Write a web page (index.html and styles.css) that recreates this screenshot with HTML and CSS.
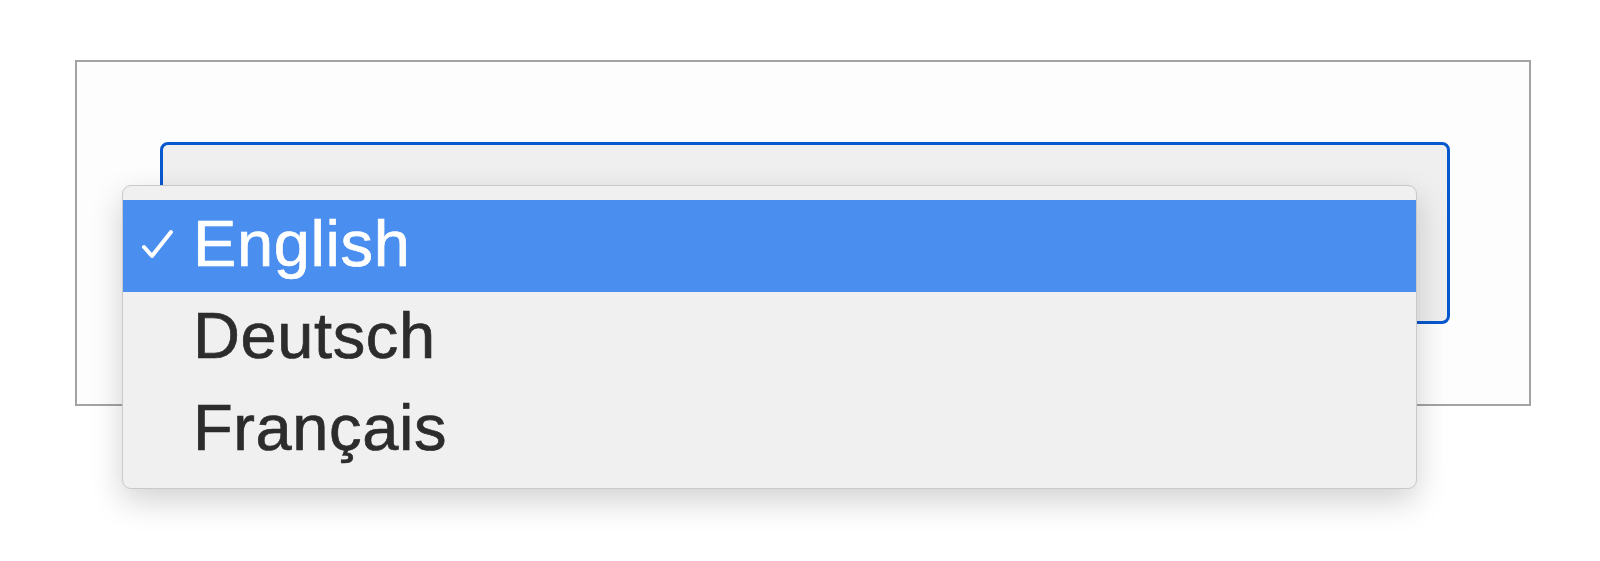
FILE: index.html
```html
<!DOCTYPE html>
<html>
<head>
<meta charset="utf-8">
<link rel="stylesheet" href="styles.css">
</head>
<body>
<div class="frame">
  <div class="select"></div>
</div>
<ul class="menu">
  <li class="item selected">
    <svg class="check" width="34" height="32" viewBox="0 0 34 32"><path d="M3 18 L11 27 L30 3" fill="none" stroke="#fff" stroke-width="4" stroke-linecap="round" stroke-linejoin="round"/></svg>
    <span>English</span>
  </li>
  <li class="item"><span>Deutsch</span></li>
  <li class="item"><span>Français</span></li>
</ul>
</body>
</html>
```

FILE: styles.css
```css
html, body {
  margin: 0;
  padding: 0;
  background: #ffffff;
}
body {
  width: 1600px;
  height: 561px;
  overflow: hidden;
  font-family: "Liberation Sans", Arial, sans-serif;
}
.frame {
  box-sizing: border-box;
  margin: 60px 0 0 75px;
  width: 1456px;
  height: 346px;
  border: 2px solid #a3a3a3;
  background: #fdfdfd;
  padding: 80px 0 0 83px;
}
.select {
  box-sizing: border-box;
  width: 1290px;
  height: 182px;
  border: 3.5px solid #0758cf;
  border-radius: 8px;
  background: #efefef;
}
.menu {
  position: absolute;
  left: 122px;
  top: 185px;
  box-sizing: border-box;
  width: 1295px;
  height: 304px;
  margin: 0;
  padding: 14px 0 11px;
  list-style: none;
  background: #f0f0f0;
  border: 1px solid #c9c9c9;
  border-radius: 9px;
  box-shadow: 0 12px 32px rgba(0, 0, 0, 0.18);
}
.item {
  position: relative;
  height: 92px;
  box-sizing: border-box;
  padding: 0 0 4px 70px;
  line-height: 88px;
  font-size: 65px;
  letter-spacing: 0.6px;
  color: #2c2c2c;
  -webkit-text-stroke: 0.7px currentColor;
}
.item.selected {
  background: #4a8ff0;
  color: #ffffff;
}
.check {
  position: absolute;
  left: 18px;
  top: 29px;
}
```
